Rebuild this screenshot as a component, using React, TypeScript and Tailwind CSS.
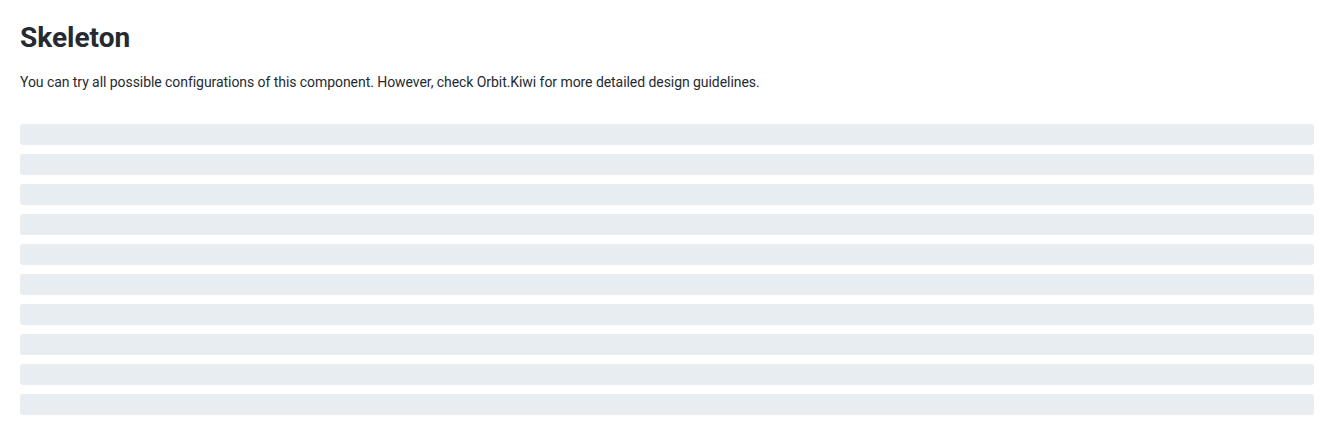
const rows = Array.from({ length: 10 });

export default function App() {
  return (
    <div className="min-h-screen bg-white p-5 font-['Roboto',sans-serif] text-[#252a31]">
      <h1 className="text-[28px] leading-[36px] font-bold">Skeleton</h1>
      <p className="mt-4 text-sm leading-5 tracking-[-0.06px]">
        You can try all possible configurations of this component. However, check Orbit.Kiwi for more detailed design guidelines.
      </p>
      <div className="mt-8 flex flex-col gap-[9px]">
        {rows.map((_, i) => (
          <div key={i} className="h-[21px] w-full rounded-[3px] bg-[#e8edf1]" />
        ))}
      </div>
    </div>
  );
}
